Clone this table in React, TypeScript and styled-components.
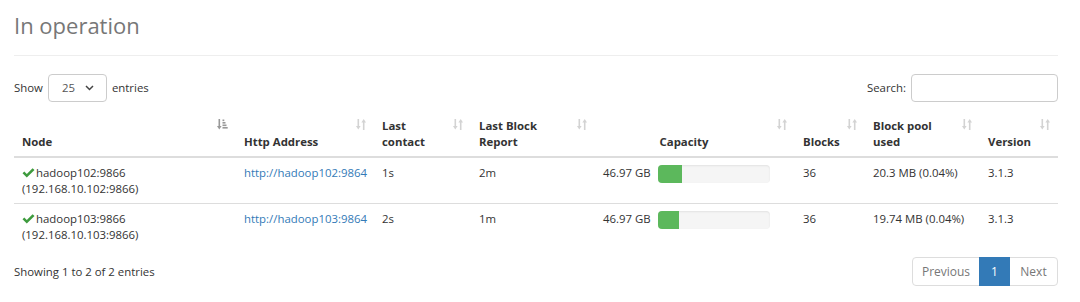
import React from "react";
import styled, { createGlobalStyle } from "styled-components";

const Global = createGlobalStyle`
  html, body { margin: 0; padding: 0; background: #fff; }
  body {
    font-family: "Open Sans", "Noto Sans", Arial, sans-serif;
    font-size: 11.4px;
    line-height: 15.5px;
    color: #333;
  }
  * { box-sizing: border-box; }
`;

const Page = styled.div`
  width: 1044px;
  margin-left: 14px;
`;

const PageHeader = styled.div`
  padding-top: 8px;
  padding-bottom: 13px;
  border-bottom: 1px solid #eee;
`;

const Title = styled.h2`
  margin: 0;
  font-size: 22px;
  line-height: 34px;
  font-weight: 400;
  color: #777;
`;

const Controls = styled.div`
  display: flex;
  justify-content: space-between;
  align-items: center;
  margin-top: 18px;
  height: 28px;
`;

const LengthLabel = styled.label`
  display: flex;
  align-items: center;
  gap: 5px;
`;

const SelectWrap = styled.span`
  position: relative;
  display: inline-block;
`;

const Select = styled.select`
  appearance: none;
  -webkit-appearance: none;
  width: 59px;
  height: 28px;
  padding: 0 0 0 13px;
  border: 1px solid #ccc;
  border-radius: 4px;
  background: #fff;
  font: inherit;
  color: #555;
`;

const Chevron = styled.svg`
  position: absolute;
  right: 13px;
  top: 11px;
  pointer-events: none;
`;

const SearchLabel = styled.label`
  display: flex;
  align-items: center;
  gap: 5px;
`;

const SearchInput = styled.input`
  width: 147px;
  height: 28px;
  border: 1px solid #ccc;
  border-radius: 4px;
  padding: 0 8px;
  font: inherit;
`;

const Table = styled.table`
  width: 1044px;
  margin-top: 9px;
  border-collapse: collapse;
  table-layout: fixed;
`;

const Th = styled.th<{ $center?: boolean }>`
  position: relative;
  vertical-align: bottom;
  text-align: ${(p) => (p.$center ? "center" : "left")};
  font-weight: 700;
  padding: 7px 30px 7px 8px;
  border-bottom: 2px solid #ddd;
`;

const SortIcon = styled.svg`
  position: absolute;
  right: 8px;
  top: 8px;
`;

const Td = styled.td`
  vertical-align: top;
  padding: 7px 8px;
  border-top: 1px solid #ddd;
`;

const Tr = styled.tr`
  &:first-child td { border-top: none; }
`;

const Check = styled.svg`
  margin-right: 1px;
  vertical-align: -1px;
`;

const Link = styled.a`
  color: #337ab7;
  text-decoration: none;
`;

const CapacityCell = styled.div`
  display: flex;
  align-items: flex-start;
  gap: 8px;
`;

const CapValue = styled.div`
  width: 47px;
  text-align: right;
  white-space: nowrap;
`;

const Bar = styled.div`
  width: 112px;
  height: 18px;
  border-radius: 4px;
  background: #f5f5f5;
  box-shadow: inset 0 1px 2px rgba(0, 0, 0, 0.08);
  overflow: hidden;
`;

const BarFill = styled.div`
  height: 100%;
  background: #5cb85c;
`;

const Footer = styled.div`
  display: flex;
  justify-content: space-between;
  align-items: center;
  margin-top: 8px;
`;

const Info = styled.div`
  color: #333;
`;

const Pager = styled.ul`
  display: flex;
  list-style: none;
  margin: 0;
  padding: 0;
`;

const PageBtn = styled.li<{ $active?: boolean; $w: number; $first?: boolean; $last?: boolean }>`
  width: ${(p) => p.$w}px;
  height: 29px;
  display: flex;
  align-items: center;
  justify-content: center;
  font-size: 12px;
  border: 1px solid ${(p) => (p.$active ? "#337ab7" : "#ddd")};
  margin-left: ${(p) => (p.$first ? 0 : -1)}px;
  background: ${(p) => (p.$active ? "#337ab7" : "#fff")};
  color: ${(p) => (p.$active ? "#fff" : "#777")};
  border-radius: ${(p) => (p.$first ? "4px 0 0 4px" : p.$last ? "0 4px 4px 0" : "0")};
  position: relative;
  z-index: ${(p) => (p.$active ? 2 : 1)};
`;

const SortBoth = () => (
  <SortIcon width="10" height="11" viewBox="0 0 10 11">
    <g fill="#d3d3d3">
      <rect x="1.5" y="0" width="1.6" height="8" />
      <polygon points="0,7 4.6,7 2.3,10.5" />
      <rect x="6.9" y="2.5" width="1.6" height="8.5" />
      <polygon points="5.4,3.5 10,3.5 7.7,0" />
    </g>
  </SortIcon>
);

const SortAsc = () => (
  <SortIcon width="11" height="11" viewBox="0 0 11 11">
    <g fill="#999">
      <rect x="1.5" y="0" width="1.6" height="8" />
      <polygon points="0,7 4.6,7 2.3,10.5" />
      <rect x="5.5" y="0.5" width="1.8" height="1.6" />
      <rect x="5.5" y="3" width="3" height="1.6" />
      <rect x="5.5" y="5.5" width="4" height="1.6" />
      <rect x="5.5" y="8" width="5.2" height="1.6" />
    </g>
  </SortIcon>
);

const OkIcon = () => (
  <Check width="13" height="10" viewBox="0 0 13 10">
    <path d="M0.5 5.2 L2.3 3.4 L4.8 5.9 L10.6 0.2 L12.5 2.1 L4.8 9.6 Z" fill="#3e9b3e" />
  </Check>
);

type Node = {
  host: string;
  ip: string;
  http: string;
  contact: string;
  report: string;
  capacity: string;
  used: number;
  blocks: number;
  pool: string;
  version: string;
};

const nodes: Node[] = [
  {
    host: "hadoop102:9866",
    ip: "(192.168.10.102:9866)",
    http: "http://hadoop102:9864",
    contact: "1s",
    report: "2m",
    capacity: "46.97 GB",
    used: 21.5,
    blocks: 36,
    pool: "20.3 MB (0.04%)",
    version: "3.1.3",
  },
  {
    host: "hadoop103:9866",
    ip: "(192.168.10.103:9866)",
    http: "http://hadoop103:9864",
    contact: "2s",
    report: "1m",
    capacity: "46.97 GB",
    used: 18.8,
    blocks: 36,
    pool: "19.74 MB (0.04%)",
    version: "3.1.3",
  },
];

const columns: { label: string; width: number; center?: boolean; asc?: boolean }[] = [
  { label: "Node", width: 222, asc: true },
  { label: "Http Address", width: 138 },
  { label: "Last contact", width: 97 },
  { label: "Last Block Report", width: 124 },
  { label: "Capacity", width: 200, center: true },
  { label: "Blocks", width: 70 },
  { label: "Block pool used", width: 115 },
  { label: "Version", width: 78 },
];

export default function App() {
  return (
    <>
      <Global />
      <Page>
        <PageHeader>
          <Title>In operation</Title>
        </PageHeader>
        <Controls>
          <LengthLabel>
            Show
            <SelectWrap>
              <Select defaultValue="25">
                <option value="10">10</option>
                <option value="25">25</option>
                <option value="50">50</option>
                <option value="100">100</option>
              </Select>
              <Chevron width="9" height="6" viewBox="0 0 9 6">
                <path d="M1 1 L4.5 4.5 L8 1" fill="none" stroke="#444" strokeWidth="1.5" />
              </Chevron>
            </SelectWrap>
            entries
          </LengthLabel>
          <SearchLabel>
            Search:
            <SearchInput type="search" />
          </SearchLabel>
        </Controls>
        <Table>
          <colgroup>
            {columns.map((c) => (
              <col key={c.label} style={{ width: c.width }} />
            ))}
          </colgroup>
          <thead>
            <tr>
              {columns.map((c) => (
                <Th key={c.label} $center={c.center}>
                  {c.label}
                  {c.asc ? <SortAsc /> : <SortBoth />}
                </Th>
              ))}
            </tr>
          </thead>
          <tbody>
            {nodes.map((n) => (
              <Tr key={n.host}>
                <Td>
                  <OkIcon />
                  {n.host}
                  <br />
                  {n.ip}
                </Td>
                <Td>
                  <Link href="#">{n.http}</Link>
                </Td>
                <Td>{n.contact}</Td>
                <Td>{n.report}</Td>
                <Td>
                  <CapacityCell>
                    <CapValue>{n.capacity}</CapValue>
                    <Bar>
                      <BarFill style={{ width: `${n.used}%` }} />
                    </Bar>
                  </CapacityCell>
                </Td>
                <Td>{n.blocks}</Td>
                <Td>{n.pool}</Td>
                <Td>{n.version}</Td>
              </Tr>
            ))}
          </tbody>
        </Table>
        <Footer>
          <Info>Showing 1 to 2 of 2 entries</Info>
          <Pager>
            <PageBtn $w={68} $first>Previous</PageBtn>
            <PageBtn $w={31} $active>1</PageBtn>
            <PageBtn $w={49} $last>Next</PageBtn>
          </Pager>
        </Footer>
      </Page>
    </>
  );
}
